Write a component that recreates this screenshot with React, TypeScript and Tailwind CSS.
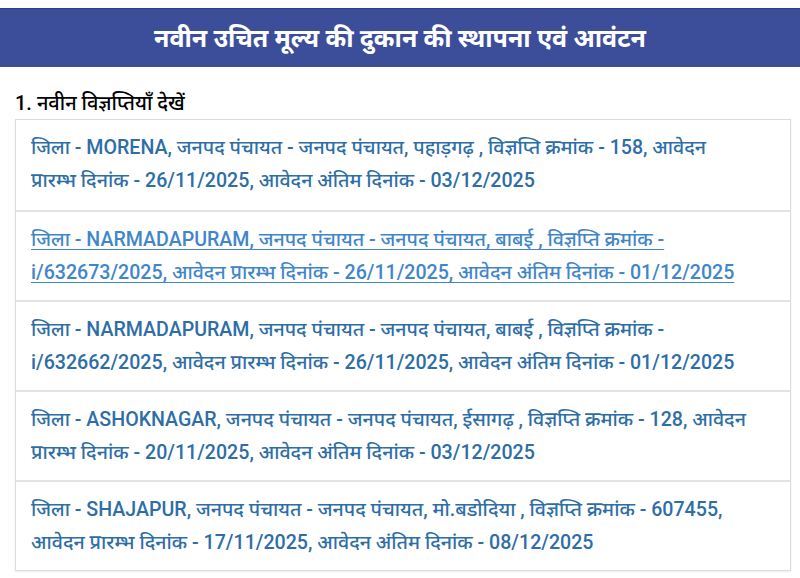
import React from "react";

const items = [
  "जिला - MORENA, जनपद पंचायत - जनपद पंचायत, पहाड़गढ़ , विज्ञप्ति क्रमांक - 158, आवेदन प्रारम्भ दिनांक - 26/11/2025, आवेदन अंतिम दिनांक - 03/12/2025",
  "जिला - NARMADAPURAM, जनपद पंचायत - जनपद पंचायत, बाबई , विज्ञप्ति क्रमांक - i/632673/2025, आवेदन प्रारम्भ दिनांक - 26/11/2025, आवेदन अंतिम दिनांक - 01/12/2025",
  "जिला - NARMADAPURAM, जनपद पंचायत - जनपद पंचायत, बाबई , विज्ञप्ति क्रमांक - i/632662/2025, आवेदन प्रारम्भ दिनांक - 26/11/2025, आवेदन अंतिम दिनांक - 01/12/2025",
  "जिला - ASHOKNAGAR, जनपद पंचायत - जनपद पंचायत, ईसागढ़ , विज्ञप्ति क्रमांक - 128, आवेदन प्रारम्भ दिनांक - 20/11/2025, आवेदन अंतिम दिनांक - 03/12/2025",
  "जिला - SHAJAPUR, जनपद पंचायत - जनपद पंचायत, मो.बडोदिया , विज्ञप्ति क्रमांक - 607455, आवेदन प्रारम्भ दिनांक - 17/11/2025, आवेदन अंतिम दिनांक - 08/12/2025",
];

export default function App() {
  return (
    <div
      className="w-[800px] h-[578px] bg-white overflow-hidden"
      style={{ fontFamily: 'Roboto, "Noto Sans", "Noto Sans Devanagari", sans-serif' }}
    >
      <div className="h-[8px]" />
      <div className="h-[59px] bg-[#3c4e9a] border-t border-[#2f3f82] flex items-center justify-center">
        <h1 className="text-white text-[25px] font-bold leading-none">
          नवीन उचित मूल्य की दुकान की स्थापना एवं आवंटन
        </h1>
      </div>
      <div className="px-[15px] pt-[22px]">
        <h2 className="text-[20px] font-medium text-black leading-[28px] mb-[2px]">
          1. नवीन विज्ञप्तियाँ देखें
        </h2>
        <ul className="w-[776px] border border-[#dddddd] shadow-[0_1px_2px_rgba(0,0,0,0.08)]">
          {items.map((t, i) => (
            <li
              key={i}
              className={
                "h-[90px] pl-[15px] pr-[39px] py-[11px] bg-white " +
                (i > 0 ? "border-t-2 border-[#e3e3e3]" : "")
              }
            >
              <a
                href="#"
                className={
                  "block text-[19.6px] leading-[33px] font-medium " +
                  (i === 1
                    ? "text-[#4186ca] underline underline-offset-[3px]"
                    : "text-[#2e6ea6]")
                }
              >
                {t}
              </a>
            </li>
          ))}
        </ul>
      </div>
    </div>
  );
}
